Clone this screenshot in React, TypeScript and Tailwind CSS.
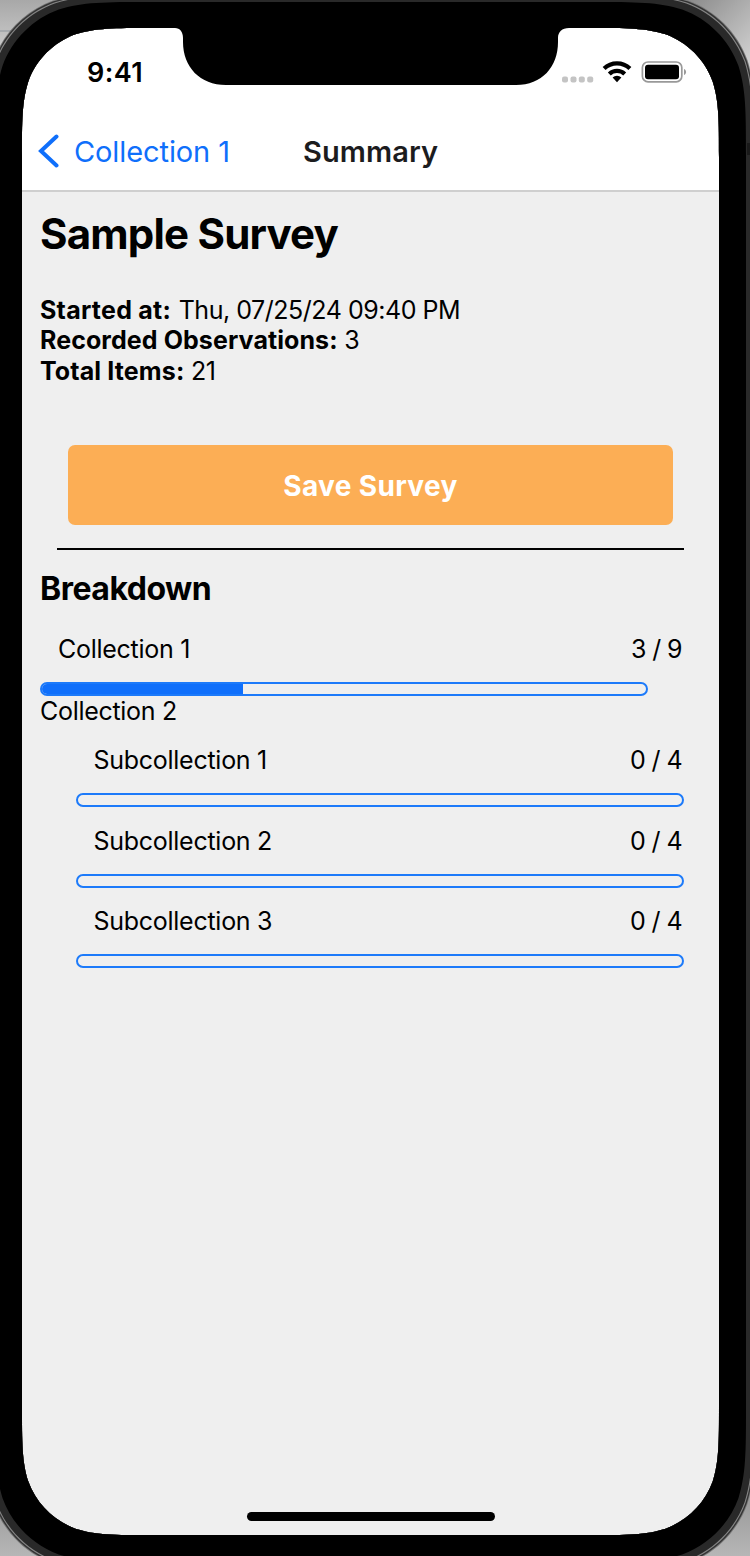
import React from "react";

function squircle(x0: number, y0: number, x1: number, y1: number, r: number) {
  const a = 1.528665 * r, b = 1.088493 * r, c = 0.868407 * r, d = 0.631494 * r;
  const e = 0.074911 * r, f = 0.372824 * r, g = 0.16906 * r;
  return [
    `M${x0 + a} ${y0}H${x1 - a}`,
    `C${x1 - b} ${y0} ${x1 - c} ${y0} ${x1 - d} ${y0 + e}`,
    `C${x1 - f} ${y0 + g} ${x1 - g} ${y0 + f} ${x1 - e} ${y0 + d}`,
    `C${x1} ${y0 + c} ${x1} ${y0 + b} ${x1} ${y0 + a}V${y1 - a}`,
    `C${x1} ${y1 - b} ${x1} ${y1 - c} ${x1 - e} ${y1 - d}`,
    `C${x1 - g} ${y1 - f} ${x1 - f} ${y1 - g} ${x1 - d} ${y1 - e}`,
    `C${x1 - c} ${y1} ${x1 - b} ${y1} ${x1 - a} ${y1}H${x0 + a}`,
    `C${x0 + b} ${y1} ${x0 + c} ${y1} ${x0 + d} ${y1 - e}`,
    `C${x0 + f} ${y1 - g} ${x0 + g} ${y1 - f} ${x0 + e} ${y1 - d}`,
    `C${x0} ${y1 - c} ${x0} ${y1 - b} ${x0} ${y1 - a}V${y0 + a}`,
    `C${x0} ${y0 + b} ${x0} ${y0 + c} ${x0 + e} ${y0 + d}`,
    `C${x0 + g} ${y0 + f} ${x0 + f} ${y0 + g} ${x0 + d} ${y0 + e}`,
    `C${x0 + c} ${y0} ${x0 + b} ${y0} ${x0 + a} ${y0}Z`,
  ].join("");
}

const opening = squircle(22, 28, 719, 1535, 84.6);
const ring = (n: number) => squircle(-5 - n, 2 - n, 746 + n, 1562 + n, 101 + n * 0.6);

function Bezel() {
  return (
    <svg className="pointer-events-none absolute inset-0" width="750" height="1556" viewBox="0 0 750 1556" aria-hidden="true">
      <defs>
        <linearGradient id="tl" gradientUnits="userSpaceOnUse" x1="0" y1="0" x2="0" y2="50">
          <stop offset="0" stopColor="#a8a8a8" />
          <stop offset="1" stopColor="#cccccc" />
        </linearGradient>
        <linearGradient id="tr" gradientUnits="userSpaceOnUse" x1="690" y1="0" x2="750" y2="60">
          <stop offset="0" stopColor="#8c8c8c" />
          <stop offset="1" stopColor="#d0d0d0" />
        </linearGradient>
        <linearGradient id="bt" gradientUnits="userSpaceOnUse" x1="0" y1="1490" x2="0" y2="1556">
          <stop offset="0" stopColor="#969696" />
          <stop offset="1" stopColor="#b6b6b6" />
        </linearGradient>
      </defs>
      <path fill="url(#tl)" d="M0 0H90L0 90Z" />
      <path d="M0 31H20" stroke="#8d959c" />
      <path fill="url(#tr)" d="M660 0H750V90Z" />
      <path fill="url(#bt)" d="M0 1466V1556H90ZM750 1466V1556H660Z" />
      <path fillRule="evenodd" fill="#777" d={ring(9.4) + opening} />
      <path fillRule="evenodd" fill="#333" d={ring(8.6) + opening} />
      <path fillRule="evenodd" fill="#858585" d={ring(7.4) + opening} />
      <path fillRule="evenodd" fill="#292929" d={ring(6.4) + opening} />
      <path fillRule="evenodd" fill="#000" d={ring(0) + opening} />
      <path d="M175 24V28C180 28 183 32 183 38V42C183 67 200 85 226 85H516C542 85 558 67 558 42V38C558 32 562 28 569 28V24Z" fill="#000" />
      <path d="M747 143H750V155H747Z" fill="#1a1a1a" />
    </svg>
  );
}

function StatusIcons() {
  return (
    <svg className="mt-[32px] mr-[32px]" width="126" height="24" viewBox="561 60 126 24" aria-hidden="true">
      <g fill="#c4c4c4">
        <rect x="562" y="76.5" width="6" height="6" rx="2" />
        <rect x="570.5" y="76.5" width="6" height="6" rx="2" />
        <rect x="578.8" y="76.5" width="6" height="6" rx="2" />
        <rect x="587.2" y="76.5" width="6" height="6" rx="2" />
      </g>
      <g fill="none" stroke="#000" strokeWidth="4.2">
        <path d="M604.1 68.6A18.6 18.6 0 0 1 629.9 68.6" />
        <path d="M609.3 74A11.2 11.2 0 0 1 624.7 74" />
      </g>
      <path d="M612.6 77.6A6.2 6.2 0 0 1 621.4 77.6L617 82.3Z" />
      <rect x="642.4" y="62" width="39.4" height="19.8" rx="5.6" fill="none" stroke="#999" strokeWidth="1.7" />
      <rect x="645" y="64.8" width="34" height="14.4" rx="3" />
      <path d="M684 69C686.8 70.4 686.8 73.6 684 75Z" fill="#999" />
    </svg>
  );
}

function Progress({ value, total }: { value: number; total: number }) {
  return (
    <div className="h-[14px] w-[608px] overflow-hidden rounded-full border-2 border-[#1c7afa] bg-[#efefef]">
      <div className="h-full bg-[#0f6ffb]" style={{ width: `${(value / total) * 100}%` }} />
    </div>
  );
}

function Row({ name, value, total }: { name: string; value: number; total: number }) {
  return (
    <div className="flex h-[30px] items-center justify-between pr-px pl-[18px] tracking-[-0.27px]">
      <span>{name}</span>
      <span className="tracking-[-0.6px]">{value} / {total}</span>
    </div>
  );
}

export default function App() {
  return (
    <div className="relative h-[1556px] w-[750px] overflow-hidden bg-[#efefef] pr-[31px] pl-[22px] font-['Inter',sans-serif] text-[25px] leading-[30px] text-black">
      <header className="flex h-[192px] flex-col border-b-2 border-[#cfcfcf] bg-white pt-[28px]">
        <div className="flex h-[84px] justify-between">
          <span className="mt-[30px] ml-[65px] text-[27px] font-semibold tracking-[0.4px]">9:41</span>
          <StatusIcons />
        </div>
        <nav className="flex h-[78px] items-center text-[29px]">
          <svg className="ml-[16px]" width="22" height="34" viewBox="0 0 22 34" fill="none" stroke="#0f6ffb" strokeWidth="4" strokeLinecap="round" aria-hidden="true">
            <path d="M18.5 2.5L3 17L18.5 31.5" />
          </svg>
          <a className="ml-[14px] w-[229px] pt-px tracking-[-0.1px] text-[#0f6ffb]">Collection 1</a>
          <h1 className="pt-px font-semibold tracking-[0.1px] text-[#1c1c1e]">Summary</h1>
        </nav>
      </header>
      <main className="pr-[36px] pl-[18px]">
        <h2 className="pt-[16px] text-[42px] leading-[52px] font-bold tracking-[-0.8px]">Sample Survey</h2>
        <div className="mt-[35px] leading-[30.4px] tracking-[-0.47px]">
          <p><b className="mr-px tracking-[0.25px]">Started at:</b> Thu, 07/25/24 09:40 PM</p>
          <p><b className="tracking-[0.08px]">Recorded Observations:</b> 3</p>
          <p><b className="tracking-[0.12px]">Total Items:</b> 21</p>
        </div>
        <button className="mt-[59px] ml-[28px] flex h-[80px] w-[605px] items-center justify-center rounded-[7px] bg-[#fcae55] pt-[2px] text-[28px] font-bold tracking-[0.35px] text-white">Save Survey</button>
        <div className="mt-[23px] ml-[17px] h-[2px] w-[627px] bg-black" />
        <h3 className="mt-[19px] text-[32px] leading-[40px] font-bold tracking-[-0.5px]">Breakdown</h3>
        <section className="mt-[25px]">
          <Row name="Collection 1" value={3} total={9} />
          <div className="mt-[18px]"><Progress value={3} total={9} /></div>
        </section>
        <section>
          <p className="tracking-[-0.3px]">Collection 2</p>
          <div className="flex flex-col gap-[18.3px] pt-[19px] pl-[35.5px]">
            {[1, 2, 3].map((n) => (
              <div key={n}>
                <Row name={`Subcollection ${n}`} value={0} total={4} />
                <div className="mt-[18px]"><Progress value={0} total={4} /></div>
              </div>
            ))}
          </div>
        </section>
      </main>
      <Bezel />
      <div className="absolute top-[1512px] left-[247px] h-[9px] w-[248px] rounded-full bg-black" />
    </div>
  );
}
